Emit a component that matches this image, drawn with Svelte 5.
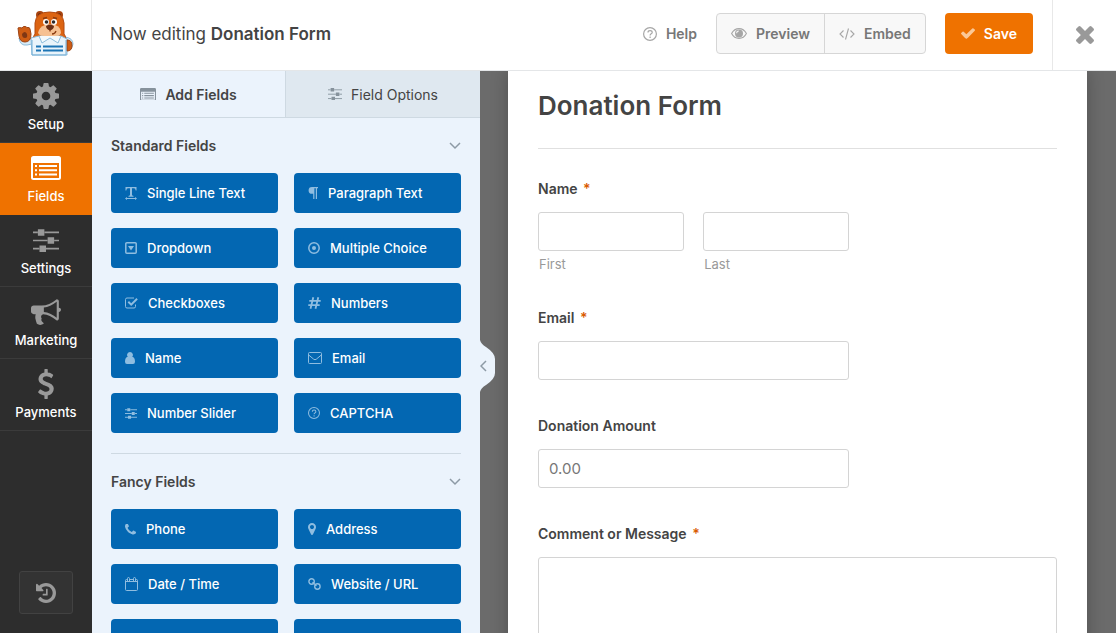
<script lang="ts">
  type Icon = { box: string; w: number; h: number; fill?: string; line?: string; sw?: number };
  type Field = { icon: string; label: string };

  const sliders =
    'M0 2h3M7 2h9M0 7h9M13 7h3M0 12h4M8 12h8';
  const sliderKnobs = 'M3 0h4v4H3zM9 5h4v4H9zM4 10h4v4H4z';
  const question =
    'M7 .6a6.400 6.400 0 1 0 0 12.800A6.400 6.400 0 0 0 7 .6zM5 5.400C5 3 9.200 3 9.200 5.400 9.200 6.800 7.100 6.900 7.100 8.400M7.100 9.600v1.400';

  const icons: Record<string, Icon> = {
    cog: {
      box: '128 128 1536 1536', w: 26, h: 26,
      fill: 'M1152 896q0-106-75-181t-181-75-181 75-75 181 75 181 181 75 181-75 75-181zm512-109v222q0 12-8 23t-20 13l-185 28q-19 54-39 91 35 50 107 138 10 12 10 25t-9 23q-27 37-99 108t-94 71q-12 0-26-9l-138-108q-44 23-91 38-16 136-29 186-7 28-36 28h-222q-14 0-24.5-8.5t-11.5-21.5l-28-184q-49-16-90-37l-141 107q-10 9-25 9-14 0-25-11-126-114-165-168-7-10-7-23 0-12 8-23 15-21 51-66.5t54-70.5q-27-50-41-99l-183-27q-13-2-21-12.5t-8-23.5v-222q0-12 8-23t19-13l186-28q14-46 39-92-40-57-107-138-10-12-10-24 0-10 9-23 26-36 98.5-107.5t94.5-71.5q13 0 26 10l138 107q44-23 91-38 16-136 29-186 7-28 36-28h222q14 0 24.5 8.5t11.5 21.5l28 184q49 16 90 37l142-107q9-9 24-9 13 0 25 10 129 119 165 170 7 8 7 22 0 12-8 23-15 21-51 66.5t-54 70.5q26 50 41 98l183 28q13 2 21 12.5t8 23.5z'
    },
    list: {
      box: '0 0 30 24', w: 30, h: 24,
      fill: 'M2.500 0h25a2.500 2.500 0 0 1 2.500 2.500v19a2.500 2.500 0 0 1-2.500 2.500h-25a2.500 2.500 0 0 1-2.500-2.500v-19a2.500 2.500 0 0 1 2.500-2.500zM2 7v14.500q0 .5.5.5h25q.5 0 .5-.5V7zM4 9h2v2H4zM8 9h18v2H8zM4 13.300h2v2H4zM8 13.300h18v2H8zM4 17.600h2v2H4zM8 17.600h18v2H8z'
    },
    settings: { box: '0 0 16 14', w: 26, h: 23, line: sliders, fill: sliderKnobs, sw: 1 },
    bullhorn: {
      box: '0 128 1792 1536', w: 30, h: 26,
      fill: 'M1664 640q53 0 90.500 37.500t37.500 90.500-37.500 90.500-90.500 37.500v384q0 52-38 90t-90 38q-417-347-812-380-58 19-91 66t-31 100.500 40 92.500q-20 33-23 65.500t6 58 33.500 55 48 50 61.500 50.500q-29 58-111.500 83t-168.500 11.500-132-55.500q-7-23-29.500-87.500t-32-94.500-23-89-15-101 3.500-98.500 22-110.500h-122q-66 0-113-47t-47-113v-192q0-66 47-113t113-47h480q435 0 896-384 52 0 90 38t38 90v384zm-128 604v-954q-394 302-768 343v270q377 42 768 341z'
    },
    dollar: {
      box: '430 0 940 1792', w: 16, h: 30,
      fill: 'M1362 1185q0 153-99.500 263.500t-258.500 136.500v175q0 14-9 23t-23 9h-135q-13 0-22.500-9.500t-9.500-22.500v-175q-66-9-127.500-31t-101.500-44.500-74-48-46.500-37.500-17.500-18q-17-21-2-41l103-135q7-10 23-12 15-2 24 9l2 2q113 99 243 125 37 8 74 8 81 0 142.500-43t61.500-122q0-28-15-53t-33.500-42-58.500-37.500-66-32-80-32.500q-39-16-61.500-25t-61.500-26.500-62.500-31-56.500-35.500-53.500-42.500-43.500-49-35.500-58-21-66.500-8.500-78q0-138 98-242t255-134v-180q0-13 9.500-22.500t22.500-9.500h135q14 0 23 9t9 23v176q57 6 110.500 23t87 33.500 63.500 37.500 39 29 15 14q17 18 5 38l-81 146q-8 15-23 16-14 3-27-7-3-3-14.500-12t-39-26.500-58.500-32-74.500-26-85.500-11.500q-95 0-155 43t-60 111q0 26 8.500 48t29.500 41.500 39.500 33 56 31 60.500 27 70 27.500q53 20 81 31.500t76 35 75.500 42.500 62 50 53 63.500 31.500 76.500 13 94z'
    },
    history: {
      box: '128 128 1536 1536', w: 20, h: 20,
      fill: 'M1664 896q0 156-61 298t-164 245-245 164-298 61q-172 0-327-72.500t-264-204.500q-7-10-6.500-22.500t8.500-20.500l137-138q10-9 25-9 16 2 23 12 73 95 179 147t225 52q104 0 198.500-40.500t163.500-109.500 109.500-163.500 40.500-198.500-40.500-198.500-109.500-163.500-163.500-109.500-198.500-40.500q-98 0-188 35.500t-160 101.500l137 138q31 30 14 69-17 40-59 40h-448q-26 0-45-19t-19-45v-448q0-42 40-59 39-17 69 14l130 129q107-101 244.500-156.500t284.500-55.500q156 0 298 61t245 164 164 245 61 298zm-640-288v448q0 14-9 23t-23 9h-320q-14 0-23-9t-9-23v-64q0-14 9-23t23-9h224v-352q0-14 9-23t23-9h64q14 0 23 9t9 23z'
    },
    times: {
      box: '302 366 1188 1188', w: 18, h: 18,
      fill: 'M1490 1322q0 40-28 68l-136 136q-28 28-68 28t-68-28l-294-294-294 294q-28 28-68 28t-68-28l-136-136q-28-28-28-68t28-68l294-294-294-294q-28-28-28-68t28-68l136-136q28-28 68-28t68 28l294 294 294-294q28-28 68-28t68 28l136 136q28 28 28 68t-28 68l-294 294 294 294q28 28 28 68z'
    },
    check: {
      box: '121 334 1550 1188', w: 14, h: 11,
      fill: 'M1671 566q0 40-28 68l-724 724-136 136q-28 28-68 28t-68-28l-136-136-362-362q-28-28-28-68t28-68l136-136q28-28 68-28t68 28l294 295 656-657q28-28 68-28t68 28l136 136q28 28 28 68z'
    },
    help: { box: '0 0 14 14', w: 14, h: 14, line: question, sw: 1.2 },
    captcha: { box: '0 0 14 14', w: 12, h: 12, line: question, sw: 1.2 },
    eye: {
      box: '0 0 16 11', w: 16, h: 11,
      fill: 'M8 1.500a4 4 0 0 0 0 8 4 4 0 0 0 0-8zM7.800 2.600v1A1.600 1.600 0 0 0 6.200 5.300h-1A2.600 2.600 0 0 1 7.800 2.600z',
      line: 'M.6 5.500C4 -1 12 -1 15.400 5.500 12 12 4 12 .6 5.500z', sw: 1.1
    },
    code: { box: '0 0 16 12', w: 16, h: 12, line: 'M4.500 2.500L1 6l3.500 3.500M11.500 2.500L15 6l-3.500 3.500M9.500 .5l-3 11', sw: 1.1 },
    text: {
      box: '0 0 12 13', w: 12, h: 13,
      fill: 'M.5 0h11v3.500h-.8Q10.500 1.200 9 1.200H7V8q0 .8 1.500.9v.8h-5v-.8Q5 8.800 5 8V1.200H3Q1.500 1.200 1.300 3.500H.5zM0 11.500l2-1.500v1h8v-1l2 1.500-2 1.500v-1H2v1z'
    },
    paragraph: { box: '0 0 10 12', w: 10, h: 12, fill: 'M4 0h6v1.200H9V12H7.800V1.200H6.400V12H5.200V6.800H4A3.400 3.400 0 0 1 4 0z' },
    dropdown: { box: '0 0 12 12', w: 12, h: 12, line: 'M1.800 .8h8.400a1 1 0 0 1 1 1v8.400a1 1 0 0 1-1 1H1.800a1 1 0 0 1-1-1V1.800a1 1 0 0 1 1-1z', fill: 'M3 4h6L6 8.400z', sw: 1.5 },
    radio: { box: '0 0 12 12', w: 12, h: 12, line: 'M6 .8a5.200 5.200 0 1 0 0 10.400A5.200 5.200 0 0 0 6 .8z', fill: 'M6 4a2 2 0 1 0 0 4 2 2 0 0 0 0-4z', sw: 1.5 },
    checkbox: { box: '0 0 13 12', w: 13, h: 12, line: 'M10.500 7.500v2q0 1.500-1.500 1.500H2Q.5 11 .5 9.500v-7Q.5 1 2 1h7', fill: 'M2.600 5.400L4 4l2.200 2.200L11.400 1l1.400 1.400-6.600 6.600z', sw: 1 },
    hash: { box: '0 0 13 12', w: 13, h: 12, line: 'M5.300 .3l-2.800 11.400M10.300 .3L7.500 11.700M1.300 3.800h11.400M.3 8.200h11.400', sw: 1.8 },
    user: { box: '0 0 10 12', w: 10, h: 12, fill: 'M5 0a2.900 2.900 0 0 1 2.200 4.800Q10 5.200 10 9.800 10 12 8 12H2Q0 12 0 9.800 0 5.200 2.800 4.800A2.900 2.900 0 0 1 5 0z' },
    mail: { box: '0 0 14 12', w: 14, h: 12, line: 'M1.500 .5h11q1 0 1 1v9q0 1-1 1h-11q-1 0-1-1v-9q0-1 1-1zM.7 3l5 4.200q1.300 1 2.600 0l5-4.200', sw: 1 },
    sliders: { box: '0 0 16 14', w: 12, h: 11, line: sliders, fill: sliderKnobs, sw: 1.3 },
    phone: {
      box: '192 256 1408 1280', w: 11, h: 11,
      fill: 'M1600 1240q0 27-10 70.500t-21 68.500q-21 50-122 106-94 51-186 51-27 0-53-3.500t-57.500-12.500-47-14.500-55.500-20.500-49-18q-98-35-175-83-127-79-264-216t-216-264q-48-77-83-175-3-9-18-49t-20.500-55.500-14.500-47-12.500-57.500-3.500-53q0-92 51-186 56-101 106-122 25-11 68.500-21t70.500-10q14 0 21 3 18 6 53 76 11 19 30 54t35 63.500 31 53.500q3 4 17.500 25t21.500 35.500 7 28.500q0 20-28.500 50t-62 55-62 53-28.500 46q0 9 5 22.500t8.500 20.500 14 24 11.500 19q76 137 174 235t235 174q2 1 19 11.500t24 14 20.500 8.500 22.500 5q18 0 46-28.500t53-62 55-62 50-28.500q14 0 28.500 7t35.500 21.500 25 17.500q25 15 53.500 31t63.500 35 54 30q70 35 76 53 3 7 3 21z'
    },
    marker: {
      box: '384 128 1024 1536', w: 8, h: 12,
      fill: 'M1152 640q0-106-75-181t-181-75-181 75-75 181 75 181 181 75 181-75 75-181zm256 0q0 109-33 179l-364 774q-16 33-47.500 52t-67.500 19-67.500-19-46.500-52l-365-774q-33-70-33-179 0-212 150-362t362-150 362 150 150 362z'
    },
    calendar: { box: '0 0 13 14', w: 13, h: 14, line: 'M2.500 2.500h-1q-1 0-1 1v9q0 1 1 1h10q1 0 1-1v-9q0-1-1-1h-1M5 2.500h3M.5 4.500h12M2.500 4V1.500q0-1 1-1t1 1V4M8.500 4V1.500q0-1 1-1t1 1V4', sw: 1 },
    link: { box: '0 0 13 12', w: 13, h: 12, line: 'M3.600 .8a2.700 2.700 0 1 0 0 5.400 2.700 2.700 0 0 0 0-5.400zM9.400 5.800a2.700 2.700 0 1 0 0 5.400 2.700 2.700 0 0 0 0-5.400zM4.500 4.200l4 3.600', sw: 1.4 },
    lock: { box: '0 0 12 13', w: 12, h: 13, line: 'M3 6V4a3 3 0 0 1 6 0v2', fill: 'M1 6h10v7H1z', sw: 1.4 }
  };

  const navItems: Field[] = [
    { icon: 'cog', label: 'Setup' },
    { icon: 'list', label: 'Fields' },
    { icon: 'settings', label: 'Settings' },
    { icon: 'bullhorn', label: 'Marketing' },
    { icon: 'dollar', label: 'Payments' }
  ];

  const groups: { title: string; fields: Field[] }[] = [
    {
      title: 'Standard Fields',
      fields: [
        { icon: 'text', label: 'Single Line Text' },
        { icon: 'paragraph', label: 'Paragraph Text' },
        { icon: 'dropdown', label: 'Dropdown' },
        { icon: 'radio', label: 'Multiple Choice' },
        { icon: 'checkbox', label: 'Checkboxes' },
        { icon: 'hash', label: 'Numbers' },
        { icon: 'user', label: 'Name' },
        { icon: 'mail', label: 'Email' },
        { icon: 'sliders', label: 'Number Slider' },
        { icon: 'captcha', label: 'CAPTCHA' }
      ]
    },
    {
      title: 'Fancy Fields',
      fields: [
        { icon: 'phone', label: 'Phone' },
        { icon: 'marker', label: 'Address' },
        { icon: 'calendar', label: 'Date / Time' },
        { icon: 'link', label: 'Website / URL' },
        { icon: 'lock', label: '' },
        { icon: 'lock', label: '' }
      ]
    }
  ];

  let view = $state('Fields');
  let tab = $state('add');
  let collapsed = $state(false);
  let closed: Record<string, boolean> = $state({});
</script>

{#snippet icon(name: string)}
  {@const i = icons[name]}
  <svg class="icon" viewBox={i.box} width={i.w} height={i.h} aria-hidden="true">
    {#if i.line}<path d={i.line} fill="none" stroke="currentColor" stroke-width={i.sw} />{/if}
    {#if i.fill}<path d={i.fill} fill="currentColor" fill-rule="evenodd" />{/if}
  </svg>
{/snippet}

<div class="builder">
  <header class="topbar">
    <div class="logo">
      <svg viewBox="0 0 58 48" width="58" height="48" aria-hidden="true">
        <path d="M15 29l-4 2Q4 34 2 29q1 8 8 7l5-1zM48 28q8 1 8 7-1 6-6 6z" fill="#d8ebf6" stroke="#8dbddc" />
        <circle cx="23" cy="6" r="4" fill="#a8440f" />
        <circle cx="42" cy="6" r="4" fill="#a8440f" />
        <circle cx="23" cy="6" r="2" fill="#6f2d12" />
        <circle cx="42" cy="6" r="2" fill="#6f2d12" />
        <path d="M16 31q0-4 2-6V14Q19 3 32.500 3T47 14v11q2 2 2 6z" fill="#dc6412" stroke="#b44a10" />
        <path d="M21 24q1-6 7-8l5-1 5 1q6 2 6 8-2 5-11 5t-12-5z" fill="#f6c193" />
        <circle cx="29" cy="13" r="3" fill="#fff" />
        <circle cx="37" cy="13" r="3" fill="#fff" />
        <circle cx="29.500" cy="13" r="1.800" fill="#2f2a2a" />
        <circle cx="36.500" cy="13" r="1.800" fill="#2f2a2a" />
        <path d="M26 9.500l4-1M36 8.500l4 1" stroke="#8a3c12" stroke-width="1.500" />
        <path d="M29 17q4-3 8 0 0 3-4 4.500-4-1.500-4-4.500z" fill="#6b2f16" />
        <path d="M33 21v1.500M35 25q3 0 4-3" fill="none" stroke="#8a3c12" stroke-width="1.300" />
        <path d="M14 29l8-2 11 1 11-1 6 3v16H15z" fill="#e9f4fb" stroke="#8dbddc" />
        <path d="M22 27l3 7 8-5 8 5 3-7" fill="#f4fafd" stroke="#8dbddc" />
        <path d="M1 19q1-1 4 0 1-2 3-1.500t2 1q3-.5 3 1.500l1 5q0 8-6 8-5 0-6-6z" fill="#cf5d14" stroke="#9c4314" />
        <path d="M5 25q3-4 5 0 1 4-2 4t-3-4z" fill="#7f3714" />
        <path d="M50 31q5 0 5 5.500T50 42z" fill="#cf5d14" stroke="#9c4314" />
        <path d="M15 31v15h34V31" fill="none" stroke="#78b2d8" />
        <path d="M19 37.500h5M26 37.500h20M19 41.500h5M26 41.500h20" stroke="#1d75b5" stroke-width="2" />
      </svg>
    </div>
    <div class="topbar-main">
      <h1>Now editing <strong>Donation Form</strong></h1>
      <a class="help" href="#help">{@render icon('help')}Help</a>
      <div class="btn-group">
        <button type="button">{@render icon('eye')}Preview</button>
        <button type="button">{@render icon('code')}Embed</button>
      </div>
      <button type="button" class="save">{@render icon('check')}Save</button>
    </div>
    <button type="button" class="close" aria-label="Close">{@render icon('times')}</button>
  </header>

  <div class="body">
    <nav class="sidebar">
      {#each navItems as item}
        <button type="button" class:active={view === item.label} onclick={() => (view = item.label)}>
          <span class="nav-icon">{@render icon(item.icon)}</span>
          {item.label}
        </button>
      {/each}
      <button type="button" class="history" aria-label="Revisions">{@render icon('history')}</button>
    </nav>

    <div class="panel-wrap">
      {#if !collapsed}
        <aside class="panel">
          <div class="tabs">
            <button type="button" class:active={tab === 'add'} onclick={() => (tab = 'add')}>
              <span class="list-icon">{@render icon('list')}</span>Add Fields
            </button>
            <button type="button" class:active={tab === 'options'} onclick={() => (tab = 'options')}>
              <span class="options-icon">{@render icon('settings')}</span>Field Options
            </button>
          </div>
          {#each groups as group}
            <section class="group">
              <button
                type="button"
                class="group-title"
                onclick={() => (closed[group.title] = !closed[group.title])}
              >
                {group.title}
                <svg viewBox="0 0 12 8" width="12" height="8" aria-hidden="true">
                  <path d="M1 1l5 5 5-5" fill="none" stroke="#8d9aa5" stroke-width="1.500" />
                </svg>
              </button>
              {#if !closed[group.title]}
                <div class="fields">
                  {#each group.fields as field}
                    <button type="button" class="field-btn">{@render icon(field.icon)}{field.label}</button>
                  {/each}
                </div>
              {/if}
            </section>
          {/each}
        </aside>
      {/if}
      <button
        type="button"
        class="toggle"
        aria-label="Toggle panel"
        onclick={() => (collapsed = !collapsed)}
      >
        <svg viewBox="0 0 16 52" width="16" height="52" aria-hidden="true">
          <path d="M0 0Q1 4 6 7q9 6 9 12v14q0 6-9 12-5 3-6 7z" fill="#ebf3fc" />
          <path d="M6 21l-5 5 5 5" fill="none" stroke="#8d9aa5" stroke-width="1.500" />
        </svg>
      </button>
    </div>

    <main class="preview">
      <form class="paper">
        <h2>Donation Form</h2>

        <fieldset>
          <legend>Name <span class="required">*</span></legend>
          <div class="name-row">
            <div>
              <input id="first" type="text" />
              <label class="sublabel" for="first">First</label>
            </div>
            <div>
              <input id="last" type="text" />
              <label class="sublabel" for="last">Last</label>
            </div>
          </div>
        </fieldset>

        <div class="field">
          <label for="email">Email <span class="required">*</span></label>
          <input id="email" type="email" />
        </div>

        <div class="field">
          <label for="amount">Donation Amount</label>
          <input id="amount" type="text" placeholder="0.00" />
        </div>

        <div class="field">
          <label for="message">Comment or Message <span class="required">*</span></label>
          <textarea id="message"></textarea>
        </div>
      </form>
    </main>
  </div>
</div>

<style>
  :global(body) {
    margin: 0;
    font-family: Inter, Roboto, 'Liberation Sans', sans-serif;
    color: #444;
  }
  .builder {
    display: flex;
    flex-direction: column;
    height: 100vh;
    overflow: hidden;
  }
  button {
    margin: 0;
    padding: 0;
    border: 0;
    background: none;
    font: inherit;
    color: inherit;
    cursor: pointer;
  }
  .icon {
    display: block;
    flex: none;
  }

  .topbar {
    display: flex;
    flex: none;
    height: 70px;
    background: #fff;
    border-bottom: 1px solid #e4e6e8;
  }
  .logo {
    box-sizing: border-box;
    width: 92px;
    padding: 9px 0 0 17px;
    border-right: 1px solid #e8e8e8;
  }
  .topbar-main {
    display: flex;
    flex: 1;
    align-items: center;
    padding: 0 19px 3px 18px;
  }
  h1 {
    flex: 1;
    margin: 0;
    font-size: 17px;
    font-weight: 400;
  }
  h1 strong {
    font-weight: 600;
  }
  .help,
  .btn-group button,
  .save {
    display: flex;
    align-items: center;
    gap: 9px;
    font-size: 14px;
    font-weight: 600;
    color: #777;
    text-decoration: none;
  }
  .help .icon,
  .btn-group .icon {
    color: #a6a6a6;
  }
  .btn-group {
    display: flex;
    margin: 0 19px;
    border: 1px solid #d6d6d6;
    border-radius: 4px;
    background: #f8f8f8;
  }
  .btn-group button {
    height: 39px;
    padding: 0 14px;
  }
  .btn-group button + button {
    border-left: 1px solid #d6d6d6;
  }
  .save {
    height: 41px;
    padding: 0 16px;
    border-radius: 4px;
    background: #ef7200;
    color: #fff;
  }
  .save .icon {
    color: #fbc896;
  }
  .close {
    display: grid;
    place-items: center;
    width: 64px;
    border-left: 1px solid #e8e8e8;
    color: #999;
  }

  .body {
    display: flex;
    flex: 1;
    min-height: 0;
  }
  .sidebar {
    display: flex;
    flex-direction: column;
    flex: none;
    width: 92px;
    background: #2d2d2d;
    color: #fff;
    font-size: 13px;
    font-weight: 500;
  }
  .sidebar button {
    box-sizing: border-box;
    height: 72px;
    border-bottom: 1px solid #3b3b3b;
    line-height: 20px;
  }
  .sidebar .active {
    background: #ef7200;
    border-color: #ef7200;
  }
  .nav-icon {
    display: grid;
    place-items: center;
    height: 34px;
    margin-bottom: 1px;
    color: #999;
  }
  .active .nav-icon {
    color: #fff;
  }
  .sidebar .history {
    display: grid;
    place-items: center;
    width: 54px;
    height: 43px;
    margin: auto 19px 19px;
    border: 1px solid #424242;
    border-radius: 3px;
    background: #333;
    color: #999;
  }

  .panel-wrap {
    position: relative;
    display: flex;
    flex: none;
  }
  .panel {
    width: 388px;
    overflow: hidden;
    background: #ebf3fc;
  }
  .tabs {
    display: grid;
    grid-template-columns: 1fr 1fr;
  }
  .tabs button {
    display: flex;
    align-items: center;
    justify-content: center;
    gap: 9px;
    height: 47px;
    border-bottom: 1px solid #ced9e2;
    background: #dfe8f0;
    font-size: 14px;
  }
  .tabs .active {
    border-right: 1px solid #ced9e2;
    background: #ebf3fc;
    font-weight: 600;
  }
  .tabs .icon {
    width: 100%;
    height: auto;
    color: #86929c;
  }
  .list-icon {
    width: 16px;
  }
  .options-icon {
    width: 14px;
  }
  .group {
    margin: 0 19px;
    padding-bottom: 20px;
    border-bottom: 1px solid #ced9e2;
  }
  .group-title {
    display: flex;
    align-items: center;
    justify-content: space-between;
    width: 100%;
    height: 55px;
    font-size: 14px;
    font-weight: 600;
  }
  .fields {
    display: grid;
    grid-template-columns: 1fr 1fr;
    gap: 15px 16px;
  }
  .field-btn {
    display: flex;
    align-items: center;
    gap: 10px;
    height: 40px;
    padding: 0 14px;
    border-radius: 4px;
    background: #0367b2;
    color: #fff;
    font-size: 13px;
    font-weight: 500;
  }
  .field-btn .icon {
    color: #8fbde0;
  }
  /* handle sits over the preview backdrop */
  .toggle {
    position: absolute;
    top: 269px;
    left: 100%;
  }
  .toggle svg {
    display: block;
  }

  .preview {
    flex: 1;
    min-width: 0;
    padding: 0 29px 0 28px;
    overflow: hidden;
    background: #6b6b6b;
  }
  .paper {
    box-sizing: border-box;
    min-height: 100%;
    padding: 15px 30px 30px;
    background: #fff;
    box-shadow: 0 0 16px rgba(0, 0, 0, 0.25);
  }
  h2 {
    margin: 0 0 30px;
    padding-bottom: 22px;
    border-bottom: 1px solid #e0e0e0;
    font-size: 26px;
    line-height: 40px;
    font-weight: 600;
  }
  fieldset {
    margin: 0 0 36px;
    padding: 0;
    border: 0;
  }
  .field {
    margin-bottom: 36px;
  }
  legend,
  .field label {
    display: block;
    margin-bottom: 13px;
    padding: 0;
    font-size: 14px;
    line-height: 20px;
    font-weight: 600;
  }
  .required {
    margin-left: 2px;
    color: #d95b00;
  }
  .name-row {
    display: grid;
    grid-template-columns: 1fr 1fr;
    gap: 19px;
    width: 60%;
  }
  input,
  textarea {
    display: block;
    box-sizing: border-box;
    width: 100%;
    height: 39px;
    padding: 0 10px;
    border: 1px solid #d4d4d4;
    border-radius: 3px;
    background: #fff;
    font: inherit;
    font-size: 15px;
    color: #444;
  }
  input::placeholder {
    color: #777;
    opacity: 1;
  }
  .field input {
    width: 60%;
  }
  textarea {
    height: 120px;
    resize: none;
  }
  .sublabel {
    display: block;
    margin-top: 5px;
    padding-left: 1px;
    font-size: 13px;
    line-height: 16px;
    color: #999;
  }
</style>
